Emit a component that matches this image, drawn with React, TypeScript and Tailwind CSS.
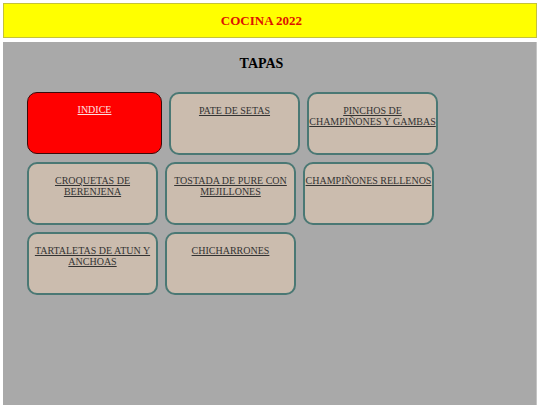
const rows: string[][] = [
  ["PATE DE SETAS", "PINCHOS DE CHAMPIÑONES Y GAMBAS"],
  ["CROQUETAS DE BERENJENA", "TOSTADA DE PURE CON MEJILLONES", "CHAMPIÑONES RELLENOS"],
  ["TARTALETAS DE ATUN Y ANCHOAS", "CHICHARRONES"],
];

function Tile({ label }: { label: string }) {
  return (
    <a
      href="#"
      className="w-[131px] h-[63px] shrink-0 border-2 border-[#4a7874] rounded-[10px] bg-[#cbbcae] pt-[11px] text-center font-['Liberation_Serif',serif] text-[10px] leading-[11px] text-[#333333] underline"
    >
      {label}
    </a>
  );
}

export default function App() {
  return (
    <div className="min-h-[405px] bg-white p-[3px] font-['Liberation_Serif',serif]">
      <div className="h-[35px] border border-[#c4c23a] bg-[#ffff00] flex items-center justify-center pr-[17px]">
        <h1 className="text-[13px] font-bold text-[#dd1100]">COCINA 2022</h1>
      </div>

      <div className="mt-[4px] h-[370px] bg-[#a9a9a9] border-r border-[#c4c4c4]">
        <h2 className="pt-[14px] pr-[16px] text-center text-[14px] leading-[16px] font-bold text-black">
          TAPAS
        </h2>

        <div className="mt-[20px] pl-[24px] flex flex-col gap-[7px]">
          <div className="flex gap-[7px] items-start">
            <a
              href="#"
              className="w-[135px] h-[62px] shrink-0 border-[1.5px] border-[#3a0a0a] rounded-[10px] bg-[#ff0000] pt-[11px] text-center font-['Liberation_Serif',serif] text-[10px] leading-[11px] text-[#ffe0e0] underline"
            >
              INDICE
            </a>
            {rows[0].map((l) => (
              <Tile key={l} label={l} />
            ))}
          </div>
          {rows.slice(1).map((r, i) => (
            <div key={i} className="flex gap-[7px]">
              {r.map((l) => (
                <Tile key={l} label={l} />
              ))}
            </div>
          ))}
        </div>
      </div>
    </div>
  );
}
